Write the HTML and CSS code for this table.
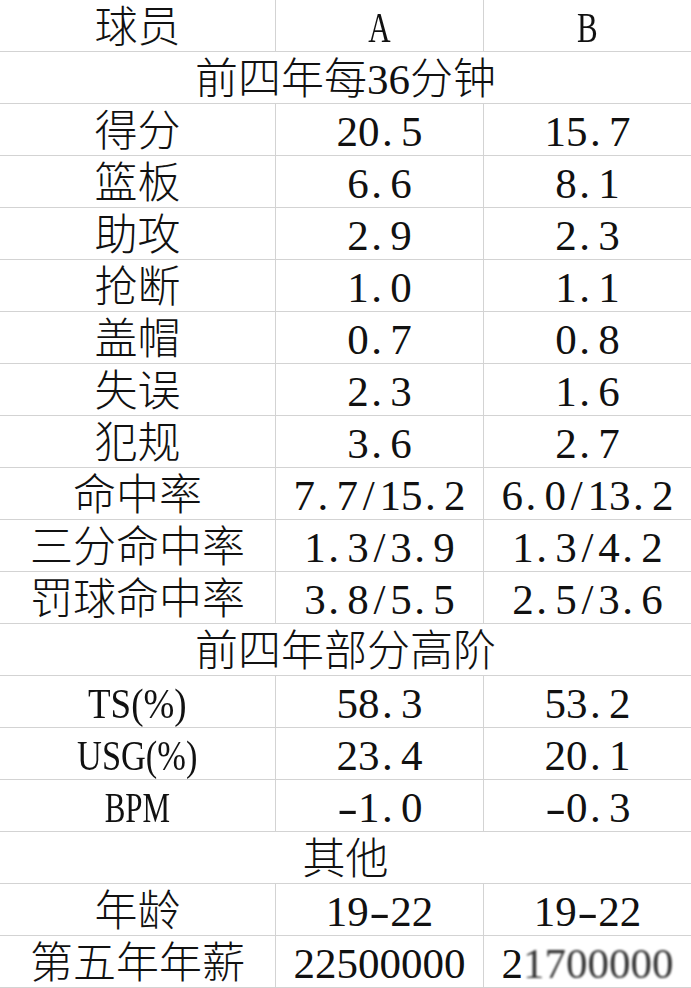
FILE: index.html
```html
<!DOCTYPE html>
<html lang="zh">
<head>
<meta charset="utf-8">
<title>球员对比</title>
<link rel="stylesheet" href="styles.css">
</head>
<body>
<div class="sheet">
  <div class="c k">球员</div>
  <div class="c m"><span class="lat sa">A</span></div>
  <div class="c v"><span class="lat sa">B</span></div>

  <div class="c span">前四年每36分钟</div>

  <div class="c k">得分</div>
  <div class="c m">20<span class="p">.</span>5</div>
  <div class="c v">15<span class="p">.</span>7</div>

  <div class="c k">篮板</div>
  <div class="c m">6<span class="p">.</span>6</div>
  <div class="c v">8<span class="p">.</span>1</div>

  <div class="c k">助攻</div>
  <div class="c m">2<span class="p">.</span>9</div>
  <div class="c v">2<span class="p">.</span>3</div>

  <div class="c k">抢断</div>
  <div class="c m">1<span class="p">.</span>0</div>
  <div class="c v">1<span class="p">.</span>1</div>

  <div class="c k">盖帽</div>
  <div class="c m">0<span class="p">.</span>7</div>
  <div class="c v">0<span class="p">.</span>8</div>

  <div class="c k">失误</div>
  <div class="c m">2<span class="p">.</span>3</div>
  <div class="c v">1<span class="p">.</span>6</div>

  <div class="c k">犯规</div>
  <div class="c m">3<span class="p">.</span>6</div>
  <div class="c v">2<span class="p">.</span>7</div>

  <div class="c k">命中率</div>
  <div class="c m">7<span class="p">.</span>7<span class="s">/</span>15<span class="p">.</span>2</div>
  <div class="c v">6<span class="p">.</span>0<span class="s">/</span>13<span class="p">.</span>2</div>

  <div class="c k">三分命中率</div>
  <div class="c m">1<span class="p">.</span>3<span class="s">/</span>3<span class="p">.</span>9</div>
  <div class="c v">1<span class="p">.</span>3<span class="s">/</span>4<span class="p">.</span>2</div>

  <div class="c k">罚球命中率</div>
  <div class="c m">3<span class="p">.</span>8<span class="s">/</span>5<span class="p">.</span>5</div>
  <div class="c v">2<span class="p">.</span>5<span class="s">/</span>3<span class="p">.</span>6</div>

  <div class="c span">前四年部分高阶</div>

  <div class="c k"><span class="lat sts">TS(%)</span></div>
  <div class="c m">58<span class="p">.</span>3</div>
  <div class="c v">53<span class="p">.</span>2</div>

  <div class="c k"><span class="lat susg">USG(%)</span></div>
  <div class="c m">23<span class="p">.</span>4</div>
  <div class="c v">20<span class="p">.</span>1</div>

  <div class="c k"><span class="lat sbpm">BPM</span></div>
  <div class="c m"><span class="d">-</span>1<span class="p">.</span>0</div>
  <div class="c v"><span class="d">-</span>0<span class="p">.</span>3</div>

  <div class="c span">其他</div>

  <div class="c k">年龄</div>
  <div class="c m">19<span class="d">-</span>22</div>
  <div class="c v">19<span class="d">-</span>22</div>

  <div class="c k">第五年年薪</div>
  <div class="c m">22500000</div>
  <div class="c v">2<span class="wm">1700000</span></div>
</div>
</body>
</html>
```
FILE: styles.css
```css
html, body {
  margin: 0;
  padding: 0;
  background: #ffffff;
}

.sheet {
  display: grid;
  grid-template-columns: 276px 208px 207px;
  grid-auto-rows: 52px;
  width: 691px;
  font-family: "Liberation Serif", "Noto Sans CJK SC", serif;
  font-size: 43px;
  font-weight: 300;
  color: #111111;
}

.c {
  display: flex;
  align-items: center;
  justify-content: center;
  border-bottom: 1px solid #d3d3d3;
  line-height: 1;
  white-space: nowrap;
  padding-top: 4px;
  box-sizing: border-box;
}

.k,
.m {
  border-right: 1px solid #d3d3d3;
}

.span {
  grid-column: 1 / span 3;
}

.p {
  display: inline-block;
  width: 0.5em;
  text-align: left;
  padding-left: 0.06em;
  box-sizing: border-box;
}

.s {
  display: inline-block;
  width: 0.5em;
  text-align: center;
}

.d {
  display: inline-block;
  width: 0.5em;
  text-align: center;
  transform: scaleX(1.45);
}

.lat {
  display: inline-block;
}

.sa { transform: scaleX(0.72); }
.sts { transform: scaleX(0.86); }
.susg { transform: scaleX(0.8); }
.sbpm { transform: scaleX(0.72); }

.wm {
  filter: blur(1.2px);
  color: #333333;
}
```
